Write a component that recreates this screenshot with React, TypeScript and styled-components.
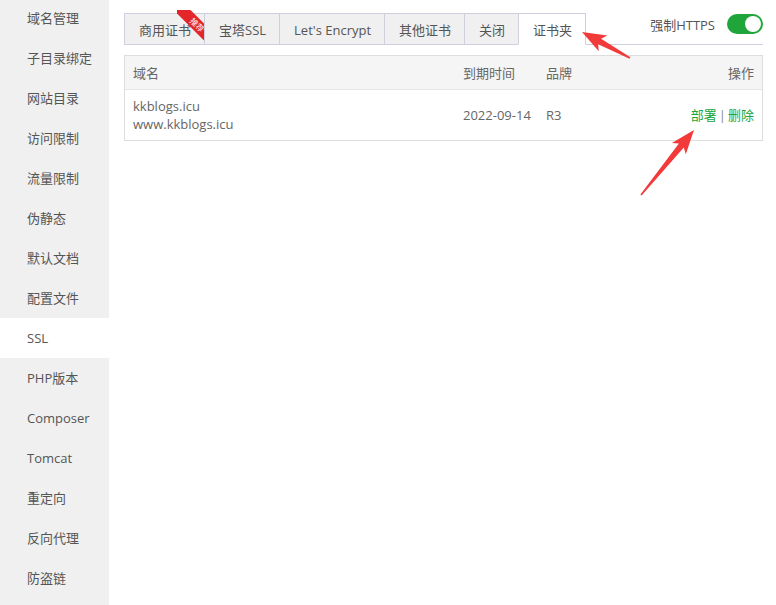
import React from 'react';
import styled, { createGlobalStyle } from 'styled-components';

const GlobalStyle = createGlobalStyle`
  html, body {
    margin: 0;
    padding: 0;
    background: #ffffff;
  }
  body {
    font-family: 'Open Sans', 'Noto Sans CJK SC', sans-serif;
    font-size: 13px;
    color: #666;
  }
`;

const menu = [
  '域名管理',
  '子目录绑定',
  '网站目录',
  '访问限制',
  '流量限制',
  '伪静态',
  '默认文档',
  '配置文件',
  'SSL',
  'PHP版本',
  'Composer',
  'Tomcat',
  '重定向',
  '反向代理',
  '防盗链',
];

const tabs = ['商用证书', '宝塔SSL', "Let's Encrypt", '其他证书', '关闭', '证书夹'];

type Pt = [number, number];

// red annotation arrow, tail -> tip
function arrowPoints(tail: Pt, tip: Pt) {
  const dx = tip[0] - tail[0];
  const dy = tip[1] - tail[1];
  const len = Math.hypot(dx, dy);
  const ux = dx / len;
  const uy = dy / len;
  const nx = -uy;
  const ny = ux;
  const head = 22;
  const bx = tip[0] - ux * head;
  const by = tip[1] - uy * head;
  const pts: Pt[] = [
    [tail[0] - nx * 0.8, tail[1] - ny * 0.8],
    [bx - nx * 3.2 + ux * 2, by - ny * 3.2 + uy * 2],
    [bx - nx * 9 - ux * 2, by - ny * 9 - uy * 2],
    tip,
    [bx + nx * 9 - ux * 2, by + ny * 9 - uy * 2],
    [bx + nx * 3.2 + ux * 2, by + ny * 3.2 + uy * 2],
    [tail[0] + nx * 0.8, tail[1] + ny * 0.8],
  ];
  return pts.map(p => `${p[0].toFixed(1)},${p[1].toFixed(1)}`).join(' ');
}

export default function App() {
  return (
    <Page>
      <GlobalStyle />
      <Sidebar>
        {menu.map(item => (
          <MenuItem key={item} $active={item === 'SSL'}>
            {item}
          </MenuItem>
        ))}
      </Sidebar>

      <Main>
        <TabBar>
          <Tabs>
            {tabs.map((t, i) => (
              <Tab key={t} $active={t === '证书夹'}>
                {t}
                {i === 0 && (
                  <Corner>
                    <FoldTop />
                    <FoldBottom />
                    <Ribbon>推荐</Ribbon>
                  </Corner>
                )}
              </Tab>
            ))}
          </Tabs>
          <ForceHttps>
            强制HTTPS
            <Switch>
              <Knob />
            </Switch>
          </ForceHttps>
        </TabBar>

        <Table>
          <HeadRow>
            <Cell>域名</Cell>
            <Cell>到期时间</Cell>
            <Cell>品牌</Cell>
            <Cell $right>操作</Cell>
          </HeadRow>
          <BodyRow>
            <Cell>
              <div>kkblogs.icu</div>
              <div>www.kkblogs.icu</div>
            </Cell>
            <Cell>2022-09-14</Cell>
            <Cell>R3</Cell>
            <Cell $right>
              <Action>部署</Action>
              <Sep>|</Sep>
              <Action>删除</Action>
            </Cell>
          </BodyRow>
        </Table>
      </Main>

      <Overlay width="776" height="605" viewBox="0 0 776 605">
        <polygon points={arrowPoints([630, 58], [582, 32])} fill="#f33a3a" />
        <polygon points={arrowPoints([641, 195], [694, 130])} fill="#f33a3a" />
      </Overlay>
    </Page>
  );
}

const Page = styled.div`
  position: relative;
  display: flex;
  width: 776px;
  height: 605px;
  overflow: hidden;
`;

const Sidebar = styled.ul`
  width: 109px;
  flex-shrink: 0;
  margin: 0;
  padding: 0;
  list-style: none;
  background: #f0f0f0;
  transform: translateY(-2px);
  height: 607px;
`;

const MenuItem = styled.li<{ $active?: boolean }>`
  height: 40px;
  line-height: 40px;
  padding-left: 27px;
  color: #555;
  background: ${p => (p.$active ? '#ffffff' : 'transparent')};
`;

const Main = styled.div`
  flex: 1;
  padding: 13px 13px 0 15px;
`;

const TabBar = styled.div`
  display: flex;
  justify-content: space-between;
  align-items: flex-end;
  border-bottom: 1px solid #cfcfdd;
  height: 31px;
`;

const Tabs = styled.div`
  display: flex;
  height: 32px;
  margin-bottom: -1px;
`;

const Tab = styled.div<{ $active?: boolean }>`
  position: relative;
  display: flex;
  align-items: center;
  padding: 1px 13px 0 14px;
  border: 1px solid #cfcfdd;
  margin-left: -1px;
  background: ${p => (p.$active ? '#ffffff' : '#f0f0f0')};
  border-bottom-color: ${p => (p.$active ? '#ffffff' : '#cfcfdd')};
  color: #555;
  box-sizing: border-box;
  &:first-child {
    margin-left: 0;
  }
`;

const Corner = styled.div`
  position: absolute;
  top: -4px;
  right: -3px;
  width: 30px;
  height: 35px;
  overflow: hidden;
  pointer-events: none;
`;

const Ribbon = styled.span`
  position: absolute;
  left: -7px;
  top: 9px;
  width: 54px;
  height: 12px;
  line-height: 12px;
  background: #e3262a;
  color: #fff;
  font-size: 8px;
  text-align: center;
  transform: rotate(45deg);
  transform-origin: center;
`;

const FoldTop = styled.i`
  position: absolute;
  left: 0;
  top: 0;
  border-style: solid;
  border-width: 0 0 4px 5px;
  border-color: transparent transparent #a8141a transparent;
`;

const FoldBottom = styled.i`
  position: absolute;
  right: 0;
  bottom: 0;
  border-style: solid;
  border-width: 5px 3px 0 0;
  border-color: #a8141a transparent transparent transparent;
`;

const ForceHttps = styled.div`
  display: flex;
  align-items: center;
  gap: 12px;
  align-self: flex-start;
  margin-top: 1px;
  color: #555;
`;

const Switch = styled.div`
  position: relative;
  width: 36px;
  height: 20px;
  border-radius: 10px;
  background: #20a53a;
`;

const Knob = styled.span`
  position: absolute;
  right: 2px;
  top: 2px;
  width: 16px;
  height: 16px;
  border-radius: 50%;
  background: #fff;
`;

const Table = styled.div`
  margin-top: 10px;
  border: 1px solid #dddddd;
`;

const Row = styled.div`
  display: grid;
  grid-template-columns: 330px 83px 1fr auto;
  align-items: center;
  padding: 0 8px 0 8px;
`;

const HeadRow = styled(Row)`
  height: 33px;
  background: #f5f5f5;
  border-bottom: 1px solid #e6e6e6;
`;

const BodyRow = styled(Row)`
  height: 50px;
  line-height: 18px;
`;

const Cell = styled.div<{ $right?: boolean }>`
  color: #666;
  text-align: ${p => (p.$right ? 'right' : 'left')};
`;

const Action = styled.a`
  color: #20a53a;
  cursor: pointer;
`;

const Sep = styled.span`
  color: #888;
  margin: 0 2px;
`;

const Overlay = styled.svg`
  position: absolute;
  left: 0;
  top: 0;
  pointer-events: none;
`;
